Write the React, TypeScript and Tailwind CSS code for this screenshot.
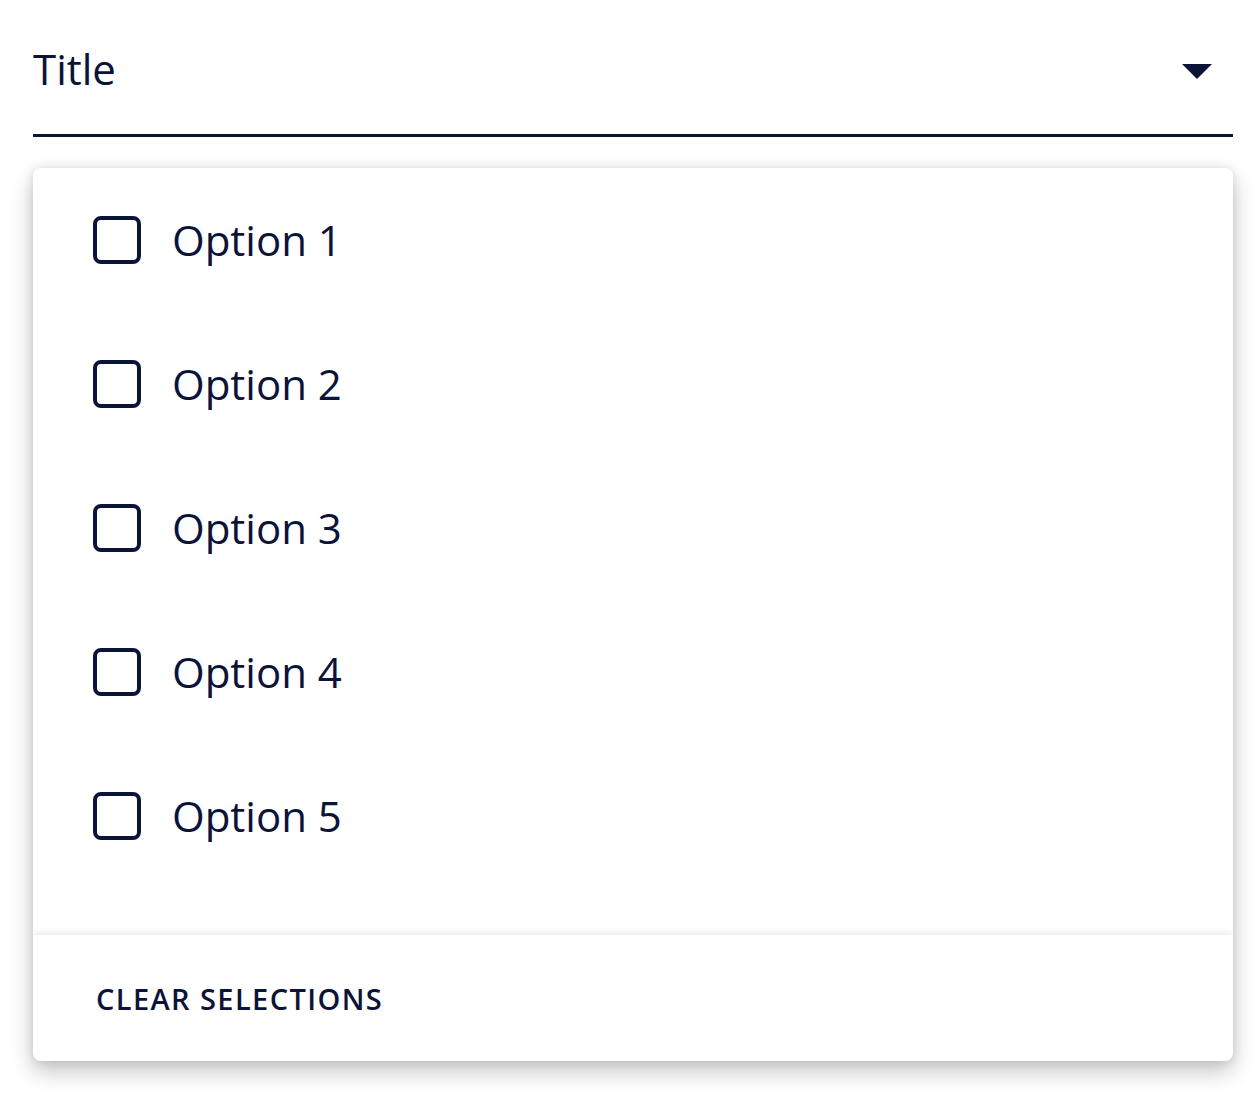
export default function App() {
    const options = ["Option 1", "Option 2", "Option 3", "Option 4", "Option 5"]
    return (
        <main
            className="min-h-screen bg-white px-[33px] pr-[27px] text-[#0b1438]"
            style={{ fontFamily: '"Open Sans", "Noto Sans", sans-serif' }}
        >
            {/* Select header */}
            <div className="flex h-[137px] items-center justify-between border-b-[3px] border-[#0b1438] pt-[4px]">
                <span className="text-[42px] leading-none">Title</span>
                <svg width="30" height="15" viewBox="0 0 30 15" className="mr-[21px] mt-[4px]">
                    <path d="M0 0 L30 0 L15 15 Z" fill="#0b1438" />
                </svg>
            </div>

            {/* Dropdown panel */}
            <div className="mt-[31px] overflow-hidden rounded-[8px] bg-white shadow-[0_10px_22px_rgba(0,0,0,0.24),0_0_10px_rgba(0,0,0,0.1)]">
                <ul className="pb-[47px]">
                    {options.map((o) => (
                        <li key={o} className="flex h-[144px] items-center pl-[60px]">
                            <span className="box-border h-[48px] w-[48px] rounded-[8px] border-[4px] border-[#0b1438]" />
                            <span className="ml-[31px] text-[42px] leading-none">{o}</span>
                        </li>
                    ))}
                </ul>
                <div className="flex h-[126px] items-center pl-[63px] shadow-[0_-3px_6px_rgba(0,0,0,0.07)]">
                    <span className="text-[29px] font-semibold leading-none tracking-[1.4px]">CLEAR SELECTIONS</span>
                </div>
            </div>
        </main>
    )
}
